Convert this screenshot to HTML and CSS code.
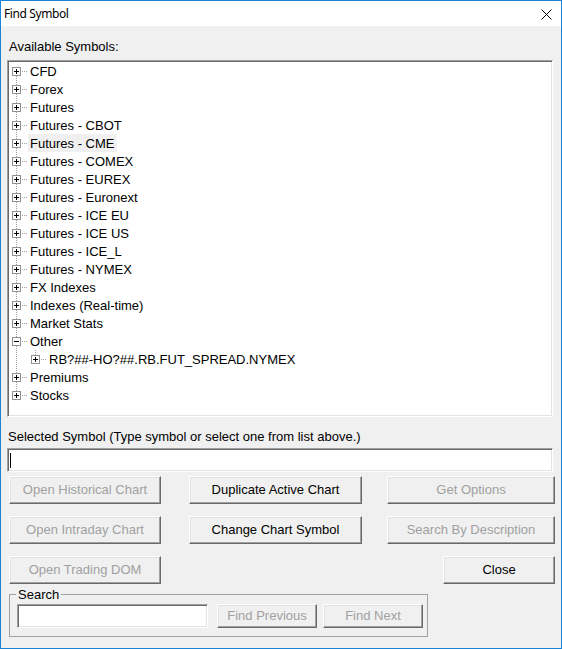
FILE: index.html
```html
<!DOCTYPE html>
<html lang="en">
<head>
    <meta charset="UTF-8">
    <title>Find Symbol</title>
    <link rel="stylesheet" href="styles.css">
</head>
<body>
    <!-- shared tree-line pieces, reused by every node -->
    <svg class="defs" width="0" height="0">
        <defs>
            <g id="rail"><path d="M7.5 0V18" stroke="#a0a0a0" stroke-dasharray="1 1"/></g>
            <g id="rail-first"><path d="M7.5 10V18" stroke="#a0a0a0" stroke-dasharray="1 1"/></g>
            <g id="rail-last"><path d="M7.5 0V9" stroke="#a0a0a0" stroke-dasharray="1 1"/></g>
            <g id="plus">
                <path d="M13 9.5H19" stroke="#a0a0a0" stroke-dasharray="1 1"/>
                <rect x="3.5" y="5.5" width="8" height="8" fill="#fff" stroke="#919191"/>
                <path d="M5 9.5H10M7.5 7V12" stroke="#000"/>
            </g>
            <g id="minus">
                <path d="M13 9.5H19" stroke="#a0a0a0" stroke-dasharray="1 1"/>
                <rect x="3.5" y="5.5" width="8" height="8" fill="#fff" stroke="#919191"/>
                <path d="M5 9.5H10" stroke="#000"/>
            </g>
        </defs>
    </svg>

    <div class="window">
        <div class="titlebar">
            <span class="title">Find Symbol</span>
            <svg class="close" width="11" height="11" viewBox="0 0 11 11">
                <path d="M0.5 0.5L10.5 10.5M10.5 0.5L0.5 10.5" stroke="#000" stroke-width="1"/>
            </svg>
        </div>

        <div class="client">
            <div class="caption">Available Symbols:</div>

            <div class="tree">
                <div class="node"><svg class="twig"><use href="#rail-first"/><use href="#plus"/></svg><span class="label">CFD</span></div>
                <div class="node"><svg class="twig"><use href="#rail"/><use href="#plus"/></svg><span class="label">Forex</span></div>
                <div class="node"><svg class="twig"><use href="#rail"/><use href="#plus"/></svg><span class="label">Futures</span></div>
                <div class="node"><svg class="twig"><use href="#rail"/><use href="#plus"/></svg><span class="label">Futures - CBOT</span></div>
                <div class="node"><svg class="twig"><use href="#rail"/><use href="#plus"/></svg><span class="label selected">Futures - CME</span></div>
                <div class="node"><svg class="twig"><use href="#rail"/><use href="#plus"/></svg><span class="label">Futures - COMEX</span></div>
                <div class="node"><svg class="twig"><use href="#rail"/><use href="#plus"/></svg><span class="label">Futures - EUREX</span></div>
                <div class="node"><svg class="twig"><use href="#rail"/><use href="#plus"/></svg><span class="label">Futures - Euronext</span></div>
                <div class="node"><svg class="twig"><use href="#rail"/><use href="#plus"/></svg><span class="label">Futures - ICE EU</span></div>
                <div class="node"><svg class="twig"><use href="#rail"/><use href="#plus"/></svg><span class="label">Futures - ICE US</span></div>
                <div class="node"><svg class="twig"><use href="#rail"/><use href="#plus"/></svg><span class="label">Futures - ICE_L</span></div>
                <div class="node"><svg class="twig"><use href="#rail"/><use href="#plus"/></svg><span class="label">Futures - NYMEX</span></div>
                <div class="node"><svg class="twig"><use href="#rail"/><use href="#plus"/></svg><span class="label">FX Indexes</span></div>
                <div class="node"><svg class="twig"><use href="#rail"/><use href="#plus"/></svg><span class="label">Indexes (Real-time)</span></div>
                <div class="node"><svg class="twig"><use href="#rail"/><use href="#plus"/></svg><span class="label">Market Stats</span></div>
                <div class="node"><svg class="twig"><use href="#rail"/><use href="#minus"/></svg><span class="label">Other</span></div>
                <div class="node"><svg class="twig twig-child"><use href="#rail"/><use href="#rail-last" x="19"/><use href="#plus" x="19"/></svg><span class="label">RB?##-HO?##.RB.FUT_SPREAD.NYMEX</span></div>
                <div class="node"><svg class="twig"><use href="#rail"/><use href="#plus"/></svg><span class="label">Premiums</span></div>
                <div class="node"><svg class="twig"><use href="#rail-last"/><use href="#plus"/></svg><span class="label">Stocks</span></div>
            </div>

            <div class="caption caption-symbol">Selected Symbol (Type symbol or select one from list above.)</div>
            <div class="field symbol-field"><span class="caret"></span></div>

            <div class="actions">
                <button class="btn w-152" disabled>Open Historical Chart</button>
                <button class="btn w-173">Duplicate Active Chart</button>
                <button class="btn w-168" disabled>Get Options</button>

                <button class="btn w-152" disabled>Open Intraday Chart</button>
                <button class="btn w-173">Change Chart Symbol</button>
                <button class="btn w-168" disabled>Search By Description</button>

                <button class="btn w-152" disabled>Open Trading DOM</button>
                <span></span>
                <button class="btn btn-close">Close</button>
            </div>

            <fieldset class="search">
                <legend>Search</legend>
                <div class="field search-field"></div>
                <button class="btn btn-find" disabled>Find Previous</button>
                <button class="btn btn-find btn-next" disabled>Find Next</button>
            </fieldset>
        </div>
    </div>
</body>
</html>
```

FILE: styles.css
```css
body {
    margin: 0;
    font-family: "Liberation Sans", Arial, sans-serif;
    font-size: 13px;
    color: #000;
}
.defs {
    position: absolute;
    width: 0;
    height: 0;
}
.window {
    width: 562px;
    height: 649px;
    box-sizing: border-box;
    border: 1px solid #1883d7;
    background-color: #f0f0f0;
    display: flex;
    flex-direction: column;
}
.titlebar {
    height: 25px;
    flex: none;
    background-color: #fff;
    display: flex;
    align-items: center;
    justify-content: space-between;
    padding: 0 9px 0 3px;
}
.title {
    font-family: "Noto Sans", sans-serif;
    font-size: 12px;
    letter-spacing: -0.4px;
}
.close {
    margin-top: 1px;
}
.client {
    padding: 13px 8px 0 6px;
}
.caption {
    line-height: 15px;
    padding-left: 2px;
}
.caption-symbol {
    margin-top: 12px;
    padding-left: 1px;
}

/* sunken 3d edge used by the tree and the text boxes */
.tree,
.field {
    box-sizing: border-box;
    background-color: #fff;
    border: 1px solid;
    border-color: #a0a0a0 #fff #fff #a0a0a0;
    box-shadow: inset 1px 1px #696969, inset -1px -1px #e3e3e3;
}
.tree {
    margin-top: 6px;
    height: 357px;
    padding: 1px;
}
.node {
    display: flex;
    height: 18px;
}
.twig {
    width: 19px;
    height: 18px;
    flex: none;
}
.twig-child {
    width: 38px;
}
.label {
    height: 18px;
    padding: 0 2px;
    line-height: 20px;
    white-space: nowrap;
}
.label.selected {
    background-color: #f0f0f0;
}

.symbol-field {
    margin-top: 4px;
    height: 24px;
    padding: 4px 0 0 2px;
}
.caret {
    display: block;
    width: 1px;
    height: 15px;
    background-color: #000;
}

.actions {
    margin-top: 4px;
    padding-left: 2px;
    display: grid;
    grid-template-columns: 180px 198px 168px;
    grid-auto-rows: 28px;
    row-gap: 12px;
}

/* raised 3d push button */
.btn {
    box-sizing: border-box;
    height: 28px;
    padding: 0 0 2px;
    font-family: "Liberation Sans", Arial, sans-serif;
    font-size: 13px;
    color: #000;
    background-color: #f0f0f0;
    border: 1px solid;
    border-color: #fff #696969 #696969 #fff;
    box-shadow: inset -1px -1px #a0a0a0, inset 1px 1px #e3e3e3;
    border-radius: 0;
}
.btn:disabled {
    color: #a0a0a0;
}
.w-152 { width: 152px; }
.w-173 { width: 173px; }
.w-168 { width: 168px; }
.btn-close {
    width: 112px;
    justify-self: end;
}

.search {
    margin: 3px 0 0 2px;
    width: 419px;
    box-sizing: border-box;
    min-width: 0;
    padding: 2px 0 8px 7px;
    border: 1px solid #a0a0a0;
    display: flex;
    align-items: flex-start;
}
.search legend {
    padding: 0 2px;
    margin-left: -1px;
    line-height: 15px;
}
.search-field {
    width: 191px;
    height: 24px;
}
.btn-find {
    width: 100px;
    height: 24px;
    margin-left: 9px;
}
.btn-next {
    margin-left: 6px;
}
```
